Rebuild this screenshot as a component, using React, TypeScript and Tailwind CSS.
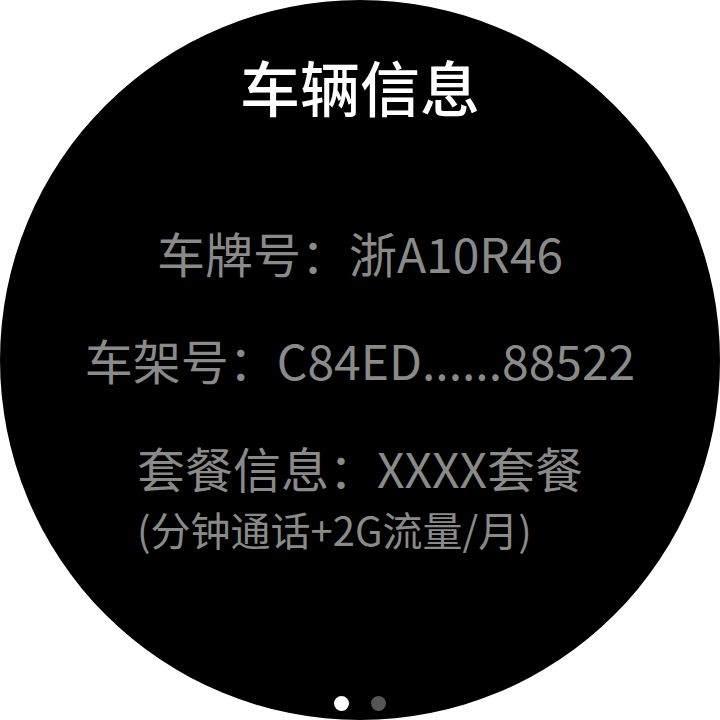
export default function App() {
  const font = { fontFamily: "'Noto Sans CJK SC', 'Noto Sans', sans-serif" };

  return (
    <div className="w-[720px] h-[720px] bg-white">
      <div
        className="relative w-[720px] h-[720px] rounded-full bg-black flex flex-col items-center overflow-hidden"
        style={font}
      >
        {/* Title */}
        <h1 className="mt-[46px] h-[80px] leading-[80px] text-[60px] font-medium text-white">
          车辆信息
        </h1>

        {/* Info rows */}
        <div className="mt-[96px] h-[60px] leading-[60px] text-[48px] text-[#8a8a8a] whitespace-nowrap">
          车牌号：浙A10R46
        </div>
        <div className="mt-[47px] h-[60px] leading-[60px] text-[48px] text-[#8a8a8a] whitespace-nowrap">
          车架号：C84ED......88522
        </div>
        <div className="mt-[48px] flex flex-col items-start text-[#8a8a8a] whitespace-nowrap">
          <div className="h-[60px] leading-[60px] text-[48px]">套餐信息：XXXX套餐</div>
          <div className="mt-[7px] h-[50px] leading-[50px] text-[40px]">(分钟通话+2G流量/月)</div>
        </div>

        {/* Page dots */}
        <div className="absolute bottom-[9px] left-0 right-0 flex justify-center gap-[22px]">
          <span className="w-[15px] h-[15px] rounded-full bg-white" />
          <span className="w-[15px] h-[15px] rounded-full bg-[#555555]" />
        </div>
      </div>
    </div>
  );
}
